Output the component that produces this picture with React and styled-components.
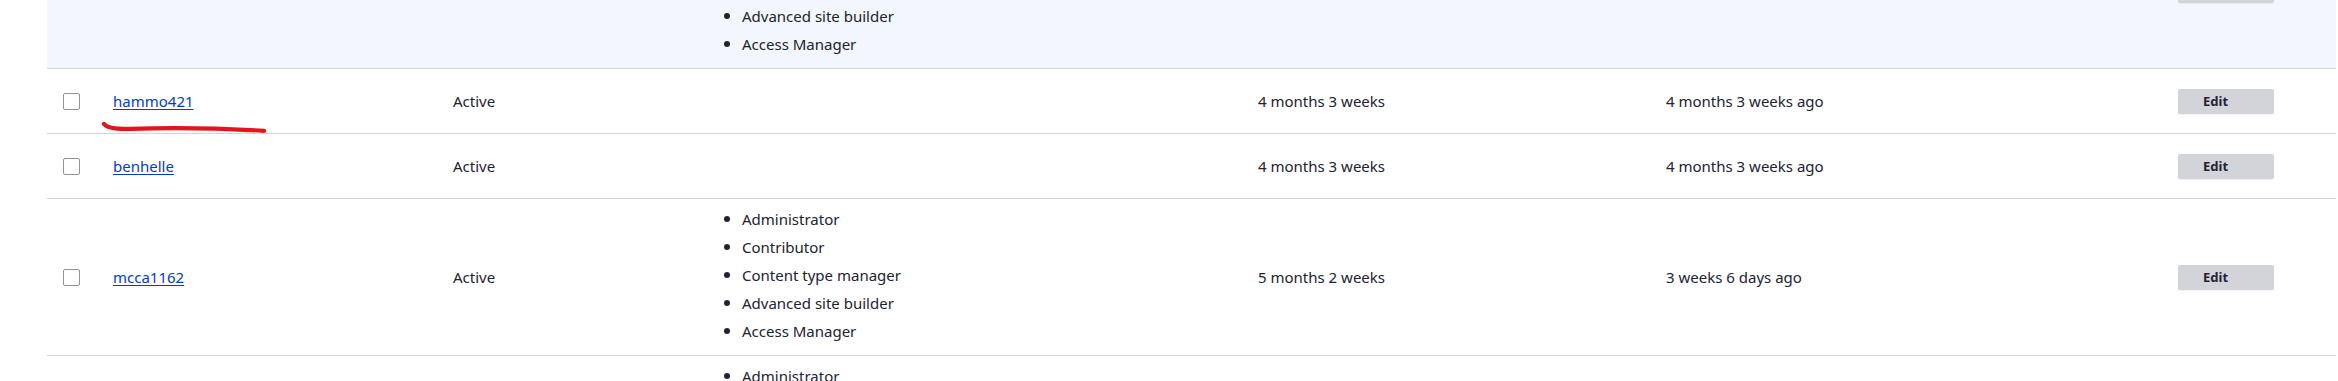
import React from 'react';
import styled, { createGlobalStyle } from 'styled-components';

const GlobalStyle = createGlobalStyle`
  html, body {
    margin: 0;
    padding: 0;
    background: #fff;
  }
  body {
    font-family: "Noto Sans", "Open Sans", sans-serif;
    color: #222330;
  }
`;

const users = [
  {
    name: 'previous',
    status: 'Active',
    roles: ['Administrator', 'Contributor', 'Content type manager', 'Advanced site builder', 'Access Manager'],
    member: '5 months 2 weeks',
    access: '1 month ago',
    hover: true,
  },
  { name: 'hammo421', status: 'Active', roles: [], member: '4 months 3 weeks', access: '4 months 3 weeks ago' },
  { name: 'benhelle', status: 'Active', roles: [], member: '4 months 3 weeks', access: '4 months 3 weeks ago' },
  {
    name: 'mcca1162',
    status: 'Active',
    roles: ['Administrator', 'Contributor', 'Content type manager', 'Advanced site builder', 'Access Manager'],
    member: '5 months 2 weeks',
    access: '3 weeks 6 days ago',
  },
  {
    name: 'next',
    status: 'Active',
    roles: ['Administrator', 'Contributor', 'Content type manager'],
    member: '5 months 2 weeks',
    access: '3 weeks 6 days ago',
  },
];

const colWidths = [50, 340, 271, 534, 408, 512, 174];

function App() {
  return (
    <>
      <GlobalStyle />
      <Viewport>
        <Table>
          <colgroup>
            {colWidths.map((w, i) => (
              <col key={i} style={{ width: w }} />
            ))}
          </colgroup>
          <tbody>
            {users.map((u) => (
              <Row key={u.name} $hover={u.hover}>
                <Cell>
                  <Checkbox type="checkbox" />
                </Cell>
                <Cell>
                  <UserLink href="#">{u.name}</UserLink>
                </Cell>
                <Cell>{u.status}</Cell>
                <Cell $list>
                  {u.roles.length > 0 && (
                    <RoleList>
                      {u.roles.map((r) => (
                        <Role key={r}>{r}</Role>
                      ))}
                    </RoleList>
                  )}
                </Cell>
                <Cell>{u.member}</Cell>
                <Cell>{u.access}</Cell>
                <Cell>
                  <EditButton>Edit</EditButton>
                </Cell>
              </Row>
            ))}
          </tbody>
        </Table>
        <Scribble width="2338" height="381" viewBox="0 0 2338 381">
          <path
            d="M104 124 Q108 129.5 130 128.8 Q200 127 264 130.8"
            fill="none"
            stroke="#e3141b"
            strokeWidth="4.2"
            strokeLinecap="round"
          />
        </Scribble>
      </Viewport>
    </>
  );
}

export default App;

const Viewport = styled.div`
  position: relative;
  height: 381px;
  overflow: hidden;
  padding: 0 2px 0 47px;
`;

const Table = styled.table`
  width: 2289px;
  margin-top: -88px;
  border-collapse: collapse;
  table-layout: fixed;
  font-size: 15px;
`;

const Row = styled.tr`
  background: ${(p) => (p.$hover ? '#f3f6fc' : '#fff')};
  border-bottom: 1px solid #d3d4d9;
`;

const Cell = styled.td`
  height: 48px;
  padding: ${(p) => (p.$list ? '6px 16px 10px' : '8px 16px')};
  vertical-align: middle;
  text-align: left;
  white-space: nowrap;
  line-height: 20px;
`;

const Checkbox = styled.input`
  appearance: none;
  display: block;
  width: 17px;
  height: 17px;
  margin: 0;
  border: 1px solid #919297;
  border-radius: 2px;
  background: #fff;
  box-sizing: border-box;
`;

const UserLink = styled.a`
  color: #003ecc;
  text-decoration: underline;
  text-underline-offset: 2px;
`;

const RoleList = styled.ul`
  list-style: none;
  margin: 0;
  padding: 0;
`;

const Role = styled.li`
  display: flex;
  align-items: center;
  line-height: 28px;

  &::before {
    content: '';
    width: 6px;
    height: 6px;
    border-radius: 50%;
    background: #222330;
    margin-right: 12px;
    flex: none;
  }
`;

const EditButton = styled.button`
  display: block;
  width: 96px;
  height: 25px;
  padding: 0 0 0 25px;
  text-align: left;
  border: none;
  border-radius: 2px;
  background: #d3d4d9;
  color: #222330;
  font-family: "Noto Sans", sans-serif;
  font-size: 13px;
  font-weight: 700;
  box-shadow: 0 1px 1px rgba(0, 0, 0, 0.06);
`;

const Scribble = styled.svg`
  position: absolute;
  top: 0;
  left: 0;
  pointer-events: none;
`;
